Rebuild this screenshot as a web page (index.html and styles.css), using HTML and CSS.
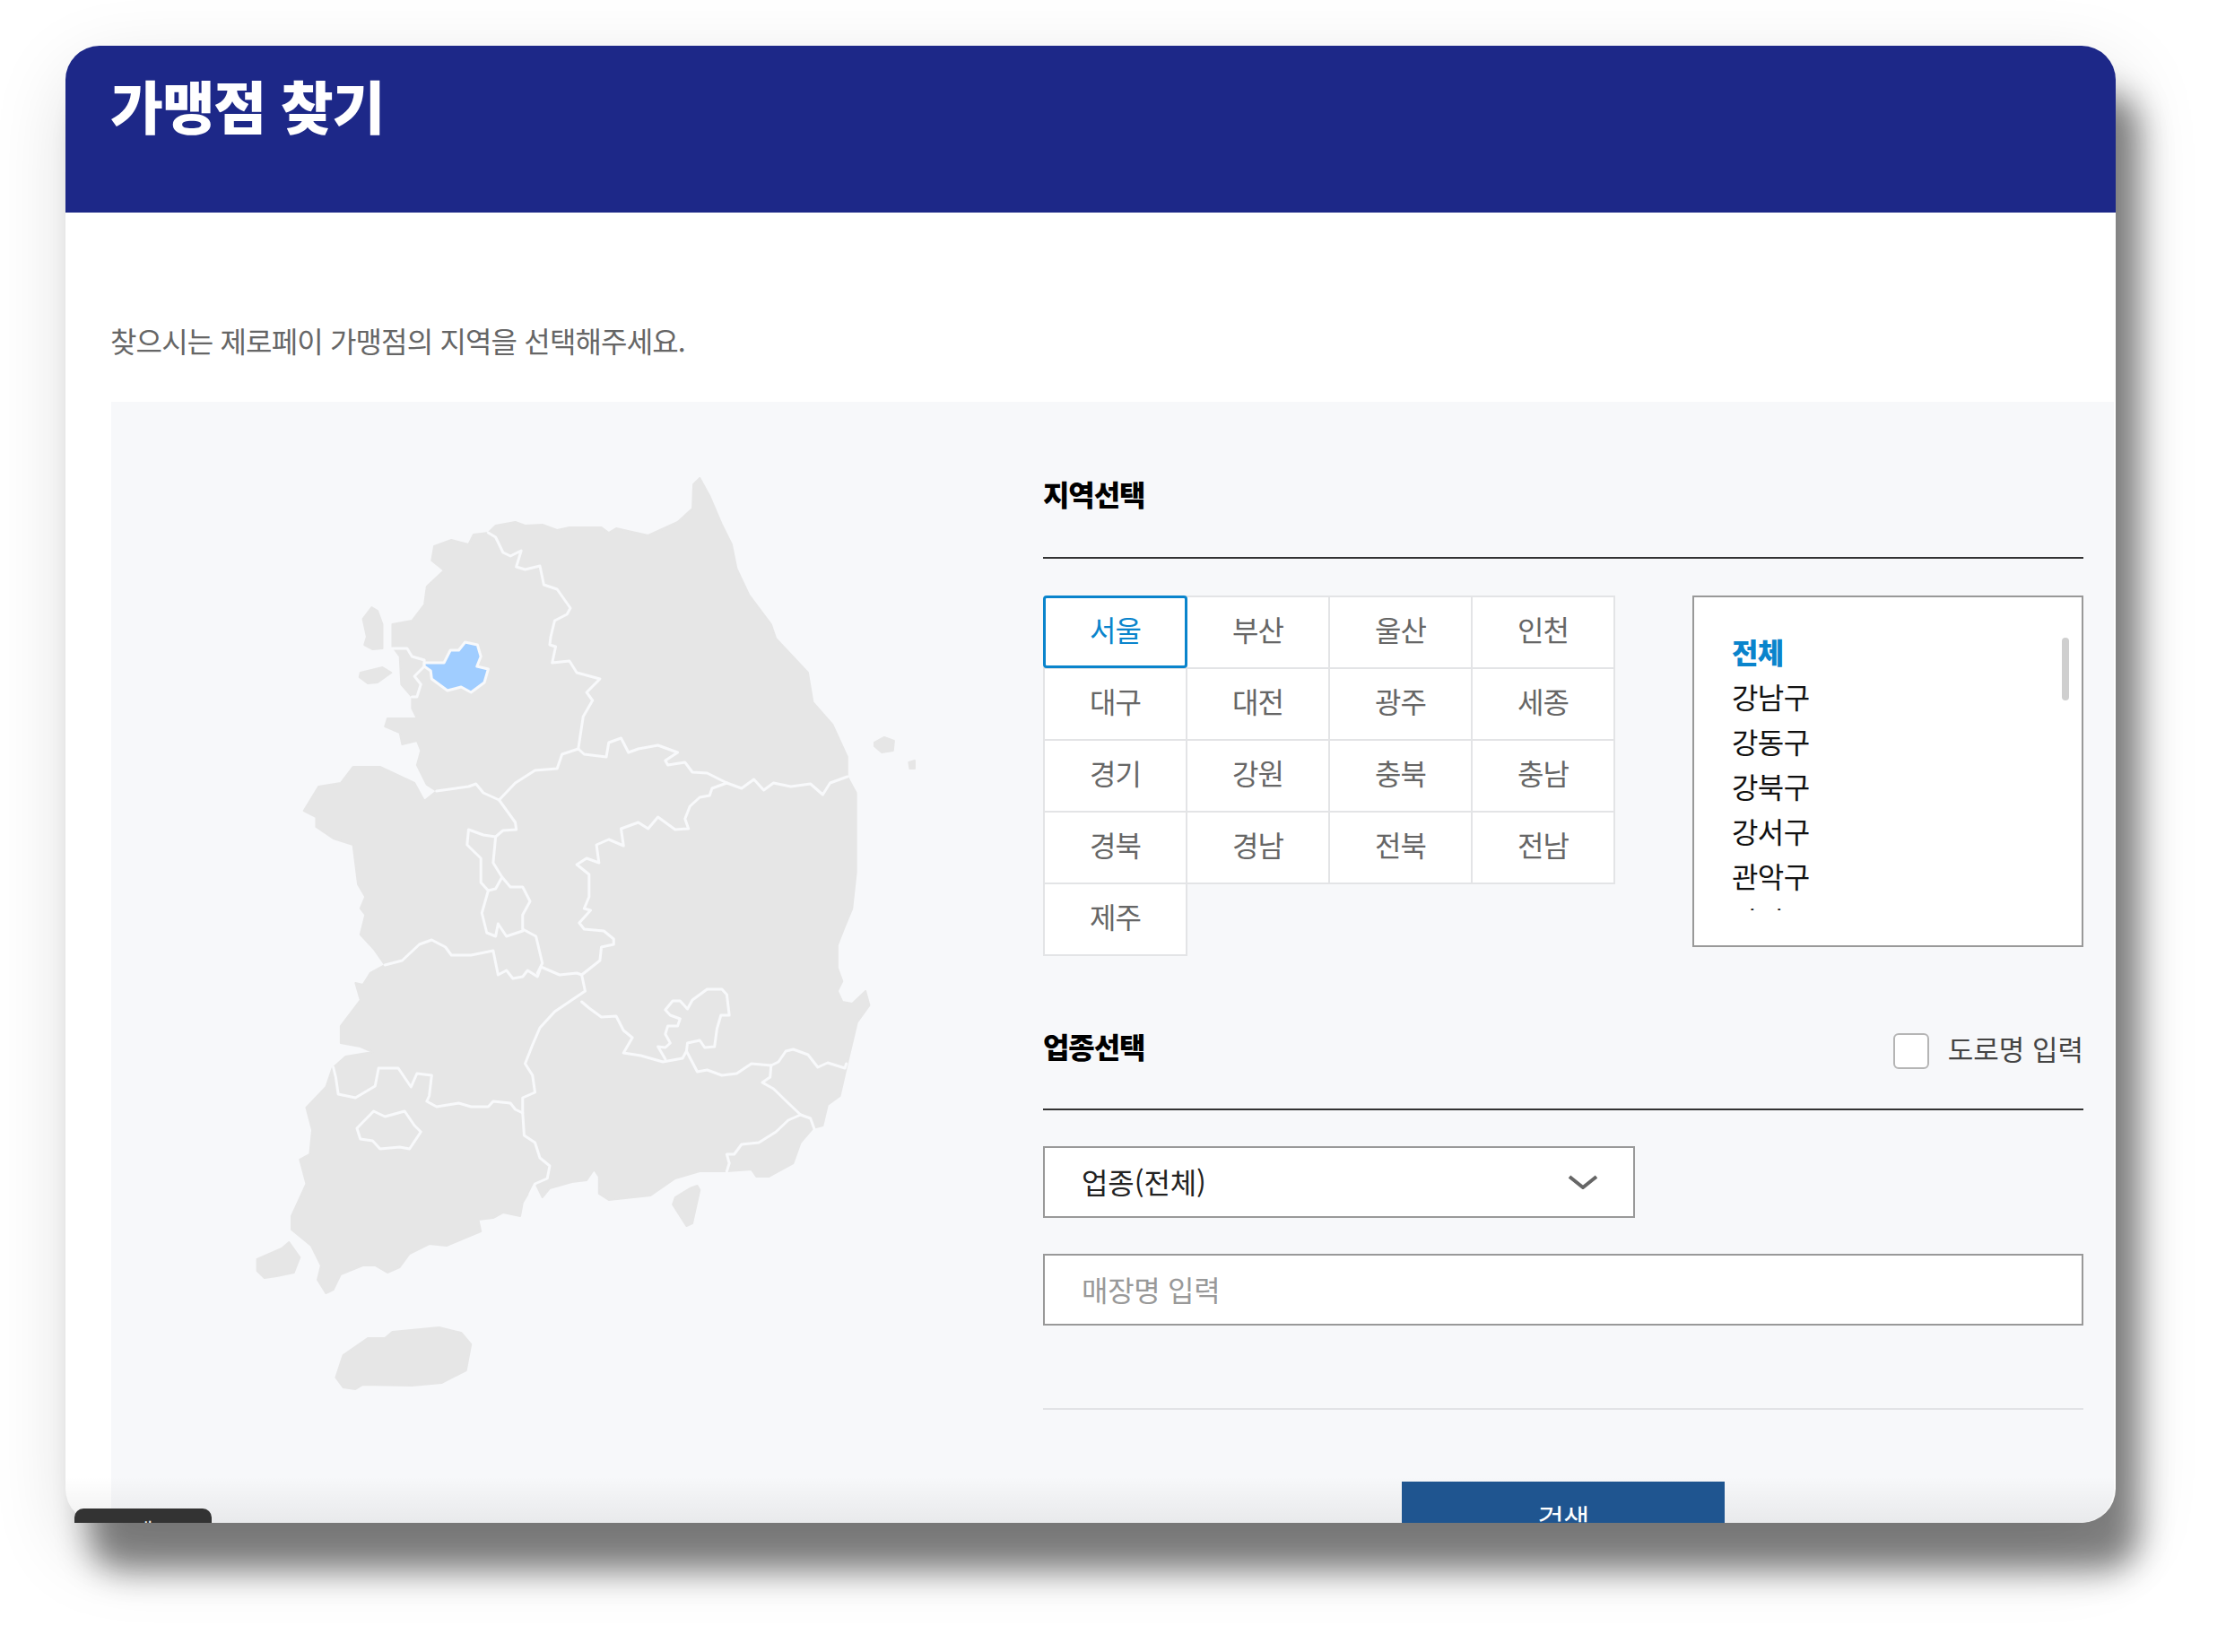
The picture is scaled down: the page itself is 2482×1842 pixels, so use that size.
FILE: index.html
```html
<!DOCTYPE html>
<html lang="ko">
<head>
<meta charset="utf-8">
<title>가맹점 찾기</title>
<link rel="stylesheet" href="styles.css">
</head>
<body>
<main class="window">
  <header class="window-head"><h1 class="title">가맹점 찾기</h1></header>
  <p class="intro">찾으시는 제로페이 가맹점의 지역을 선택해주세요.</p>
  <section class="panel">
    <div class="map-col">
      <svg class="map" viewBox="0 0 1568 1120" preserveAspectRatio="none" role="img" aria-label="대한민국 지도">
        <g class="land">
          <path d="M985 51L972 58L970 85L940 100L880 115L815 107L800 112L785 106L720 106L695 109L665 103L630 104L610 100L570 104L555 112L525 114L515 125L480 120L445 127L440 143L465 154L430 172L425 192L400 210L360 214L360 239L375 250L378 281L400 295L400 308L410 319L350 319L345 328L375 335L380 348L410 344L418 355L410 371L430 393L450 400L425 411L405 391L335 373L280 373L255 391L210 395L180 422L205 429L205 440L240 453L280 460L290 504L305 518L295 531L305 538L295 560L322 576L345 594L315 603L300 616L285 614L295 633L255 662L255 681L295 685L320 691L265 696L238 709L225 730L185 753L197 778L192 805L172 811L185 838L155 874L155 889L195 907L215 929L208 945L225 960L240 956L255 939L300 929L325 929L350 937L375 931L395 916L435 905L470 907L540 891L535 878L565 876L585 870L620 874L625 859L650 836L665 853L680 843L725 836L755 834L770 822L780 830L780 849L800 856L885 851L935 832L985 824L1040 824L1090 822L1100 830L1125 830L1175 815L1190 792L1215 776L1235 773L1245 750L1270 740L1285 704L1305 658L1330 639L1322 623L1295 637L1275 635L1265 623L1275 612L1265 597L1265 572L1280 551L1295 531L1303 491L1303 402L1285 384L1285 362L1255 326L1215 301L1205 268L1140 230L1130 214L1085 181L1060 152L1050 125L1030 103L1005 71Z"/>
          <path d="M318 195L300 208L308 228L303 237L320 242L340 241L340 214L330 199Z"/>
          <path d="M295 268L340 262L358 268L330 279L310 280L293 273Z"/>
          <path d="M1340 346L1360 340L1380 344L1378 355L1355 357L1340 350Z"/>
          <path d="M1410 368L1422 366L1422 375L1412 375Z"/>
          <path d="M150 903L172 920L160 937L125 941L100 943L85 935L85 922L135 910Z"/>
          <path d="M980 840L985 845L970 882L958 885L945 874L930 861L935 853L965 843Z"/>
          <path d="M455 998L500 1004L520 1017L510 1046L460 1060L400 1063L300 1062L285 1067L260 1065L245 1054L260 1029L310 1010L345 1010L360 1003Z"/>
        </g>
        <g class="borders">
          <path d="M555 112L570 117L585 134L600 138L622 132L612 150L630 153L660 149L668 170L695 175L722 196L715 203L690 210L682 228L680 237L692 239L685 257L720 255L735 268L782 275L755 290L767 299L748 317L738 353"/>
          <path d="M738 353L705 359L695 375L650 377L610 391L577 410L545 402L530 392L515 395L450 400"/>
          <path d="M738 353L750 359L795 362L800 346L825 341L840 357L860 353L900 349L940 357L915 366L920 371L955 368L970 379L1000 380L1040 391"/>
          <path d="M1040 391L1070 397L1095 387L1115 399L1135 391L1170 395L1210 392L1235 404L1250 391L1285 384"/>
          <path d="M1040 391L1010 397L1005 405L985 407L965 417L955 431L962 442L935 443L900 429L880 442L860 435L825 442L830 461L800 454L775 460L780 480L755 475L735 482L760 493L760 518L750 531L763 533L740 547L750 554L790 556L810 565L810 571L785 574L782 589L745 605"/>
          <path d="M577 410L610 435L612 443L585 444L570 451L565 480L583 496L600 507L625 507L640 523L625 538L625 554L652 562L665 592L655 603"/>
          <path d="M570 451L545 449L515 443L512 460L540 475L540 491L540 502L555 511L570 509L583 496"/>
          <path d="M555 511L542 536L552 558L570 562L575 548L592 562L625 556"/>
          <path d="M345 594L380 589L415 571L440 566L468 574L480 583L520 583L565 578L575 605L592 600L605 609L625 607L635 600L655 607L662 596L700 605L735 603L745 605L752 623L690 646L660 664L645 683L630 704L645 717L650 736L625 742L625 759"/>
          <path d="M240 708L245 719L250 738L285 742L325 729L332 709L372 709L398 730L410 715L440 717L435 740L430 746L450 752L495 748L520 752L555 752L565 746L600 748L610 755L625 759L628 784L650 792L660 809L680 818L675 832L650 838L640 849"/>
          <path d="M322 757L345 763L385 757L405 773L418 780L395 799L375 797L335 799L320 790L295 788L288 776Z"/>
          <path d="M745 635L760 642L785 652L815 651L830 667L848 675L830 692L865 695L910 702L950 698L958 690L980 713L1000 711L1030 717L1060 715L1090 704L1130 706"/>
          <path d="M958 690L960 681L985 678L995 686L1015 685L1020 665L1028 650L1045 650L1040 627L1030 621L1000 621L970 633L960 643L945 634L930 634L915 644L925 650L945 654L940 662L920 662L915 671L925 681L915 686L900 685L915 699"/>
          <path d="M1130 706L1145 702L1160 690L1175 688L1205 694L1225 708L1245 703L1280 709L1283 704"/>
          <path d="M1130 706L1128 719L1112 725L1135 732L1165 748L1190 761L1210 765L1218 777"/>
          <path d="M1190 761L1165 767L1140 780L1105 792L1070 794L1055 805L1040 805L1045 815L1040 824"/>
          <path d="M360 241L390 241L400 250L425 254L425 261L405 272L418 281L410 295L400 295"/>
        </g>
        <path class="seoul" d="M425 257L465 257L478 243L495 243L508 234L533 237L540 250L532 261L555 264L547 279L520 290L500 284L472 288L440 275L438 266L425 261Z"/>
      </svg>
    </div>
    <div class="form-col">
      <div class="section-head"><h2 class="section-title">지역선택</h2></div>
      <div class="region-row">
        <div class="region-grid">
          <button class="cell is-active">서울</button><button class="cell">부산</button><button class="cell">울산</button><button class="cell">인천</button>
          <button class="cell">대구</button><button class="cell">대전</button><button class="cell">광주</button><button class="cell">세종</button>
          <button class="cell">경기</button><button class="cell">강원</button><button class="cell">충북</button><button class="cell">충남</button>
          <button class="cell">경북</button><button class="cell">경남</button><button class="cell">전북</button><button class="cell">전남</button>
          <button class="cell">제주</button>
        </div>
        <div class="district-box">
          <ul class="district-list">
            <li class="district is-active">전체</li>
            <li class="district">강남구</li>
            <li class="district">강동구</li>
            <li class="district">강북구</li>
            <li class="district">강서구</li>
            <li class="district">관악구</li>
            <li class="district">광진구</li>
          </ul>
          <span class="thumb"></span>
        </div>
      </div>
      <div class="section-head section-head-second">
        <h2 class="section-title">업종선택</h2>
        <label class="road-check"><input class="check" type="checkbox"><span>도로명 입력</span></label>
      </div>
      <div class="select">
        <span class="select-label">업종(전체)</span>
        <svg class="chevron" viewBox="0 0 34 16"><path d="M2 2L17 14L32 2"/></svg>
      </div>
      <input class="text-input" type="text" placeholder="매장명 입력">
      <hr class="divider">
      <div class="actions"><button class="search">검색</button></div>
    </div>
  </section>
  <div class="veil"></div>
  <div class="chip">세</div>
</main>
</body>
</html>
```

FILE: styles.css
```css
* { box-sizing: border-box; }
html, body { margin: 0; padding: 0; background: #fff; }
body {
  width: 2482px;
  height: 1842px;
  overflow: hidden;
  padding: 51px 0 0 73px;
  font-family: "Noto Sans CJK KR", "Noto Sans", sans-serif;
}
.window {
  position: relative;
  width: 2286px;
  height: 1647px;
  background: #fff;
  border-radius: 38px;
  box-shadow: 26px 53px 36px rgba(0,0,0,.48), 6px 30px 90px rgba(0,0,0,.14);
}
.window-head {
  height: 186px;
  background: #1d2888;
  border-radius: 38px 38px 0 0;
  padding: 21px 0 0 50px;
}
.title {
  margin: 0;
  font-size: 64px;
  line-height: 88px;
  font-weight: 900;
  letter-spacing: -1.2px;
  color: #fff;
}
.intro {
  margin: 0;
  height: 211px;
  padding: 118px 0 0 50px;
  font-size: 32px;
  line-height: 48px;
  letter-spacing: -.85px;
  color: #666;
}
.panel {
  display: flex;
  height: 1250px;
  margin: 0 2px 0 51px;
  background: #f7f8fa;
  border-radius: 0 0 38px 0;
  overflow: hidden;
}
.map-col { width: 1039px; padding: 34px 0 0 116px; flex: none; }
.map { display: block; width: 860px; height: 1120px; filter: blur(.4px); }
.land path { fill: #e6e6e6; stroke: #e6e6e6; stroke-width: 2; stroke-linejoin: round; vector-effect: non-scaling-stroke; }
.borders path { fill: none; stroke: #f8f9fb; stroke-width: 3; stroke-linejoin: round; stroke-linecap: round; vector-effect: non-scaling-stroke; }
.seoul { fill: #a0cdff; stroke: #f8f9fb; stroke-width: 3; stroke-linejoin: round; vector-effect: non-scaling-stroke; }
.form-col { width: 1160px; flex: none; padding-top: 82px; }
.section-head {
  display: flex;
  justify-content: space-between;
  align-items: flex-start;
  height: 93px;
  border-bottom: 2px solid #333;
}
.section-head-second { height: 92px; margin-top: 80px; }
.section-title { margin: 0; font-size: 32px; line-height: 40px; font-weight: 900; letter-spacing: -1.1px; color: #000; }
.region-row { display: flex; justify-content: space-between; margin-top: 41px; height: 402px; }
.region-grid {
  display: grid;
  grid-template-columns: repeat(4, 159px);
  grid-auto-rows: 80px;
  width: 640px;
}
.cell {
  width: 161px;
  height: 82px;
  padding: 0 0 8px;
  font: inherit;
  font-size: 32px;
  letter-spacing: -1px;
  color: #666;
  background: #fff;
  border: 2px solid #e3e4e6;
  border-radius: 0;
}
.cell.is-active {
  position: relative;
  z-index: 1;
  height: 81px;
  color: #0a84cc;
  border: 3px solid #0a84cc;
  border-radius: 4px;
}
.district-box {
  position: relative;
  width: 436px;
  height: 392px;
  padding: 35px 0 0 42px;
  background: #fff;
  border: 2px solid #999;
}
.district-list { margin: 0; padding: 0; list-style: none; height: 314px; overflow: hidden; }
.district { font-size: 32px; line-height: 50px; letter-spacing: -.6px; color: #111; }
.district.is-active { font-weight: 900; color: #0a84cc; }
.thumb { position: absolute; top: 45px; right: 14px; width: 8px; height: 70px; border-radius: 4px; background: #cfcfcf; }
.road-check { display: flex; align-items: center; gap: 21px; margin-top: 3px; font-size: 31px; line-height: 40px; color: #444; }
.check {
  appearance: none;
  width: 40px;
  height: 40px;
  margin: 3px 0 -3px;
  background: #fff;
  border: 2px solid #b5b5b5;
  border-radius: 6px;
}
.select {
  display: flex;
  justify-content: space-between;
  align-items: center;
  width: 660px;
  height: 80px;
  margin-top: 40px;
  padding: 0 39px 0 41px;
  background: #fff;
  border: 2px solid #999;
  font-size: 32px;
  letter-spacing: -.1px;
  color: #222;
}
.select-label { margin-top: -3px; }
.chevron { width: 34px; height: 16px; }
.chevron path { fill: none; stroke: #666; stroke-width: 4; }
.text-input {
  display: block;
  width: 1160px;
  height: 80px;
  margin-top: 40px;
  padding: 0 41px 3px;
  background: #fff;
  border: 2px solid #999;
  border-radius: 0;
  outline: 0;
  font: inherit;
  font-size: 32px;
  letter-spacing: -.3px;
  color: #222;
}
.text-input::placeholder { color: #999; opacity: 1; }
.divider { height: 2px; margin: 92px 0 0; border: 0; background: #e2e3e6; }
.actions { display: flex; justify-content: center; margin-top: 80px; }
.search {
  position: relative;
  z-index: 2;
  width: 360px;
  height: 80px;
  padding: 0;
  border: 0;
  background: #1f5590;
  color: #fff;
  font: inherit;
  font-size: 32px;
  letter-spacing: -1px;
}
.veil {
  position: absolute;
  left: 0;
  right: 0;
  bottom: 0;
  height: 52px;
  border-radius: 0 0 38px 38px;
  background: linear-gradient(rgba(0,0,0,0), rgba(0,0,0,.06));
}
.chip {
  position: absolute;
  left: 10px;
  bottom: 0;
  width: 153px;
  height: 16px;
  padding-top: 9px;
  overflow: hidden;
  border-radius: 10px 10px 0 0;
  background: #333;
  color: #eee;
  font-size: 24px;
  line-height: 30px;
  text-align: center;
}
```
